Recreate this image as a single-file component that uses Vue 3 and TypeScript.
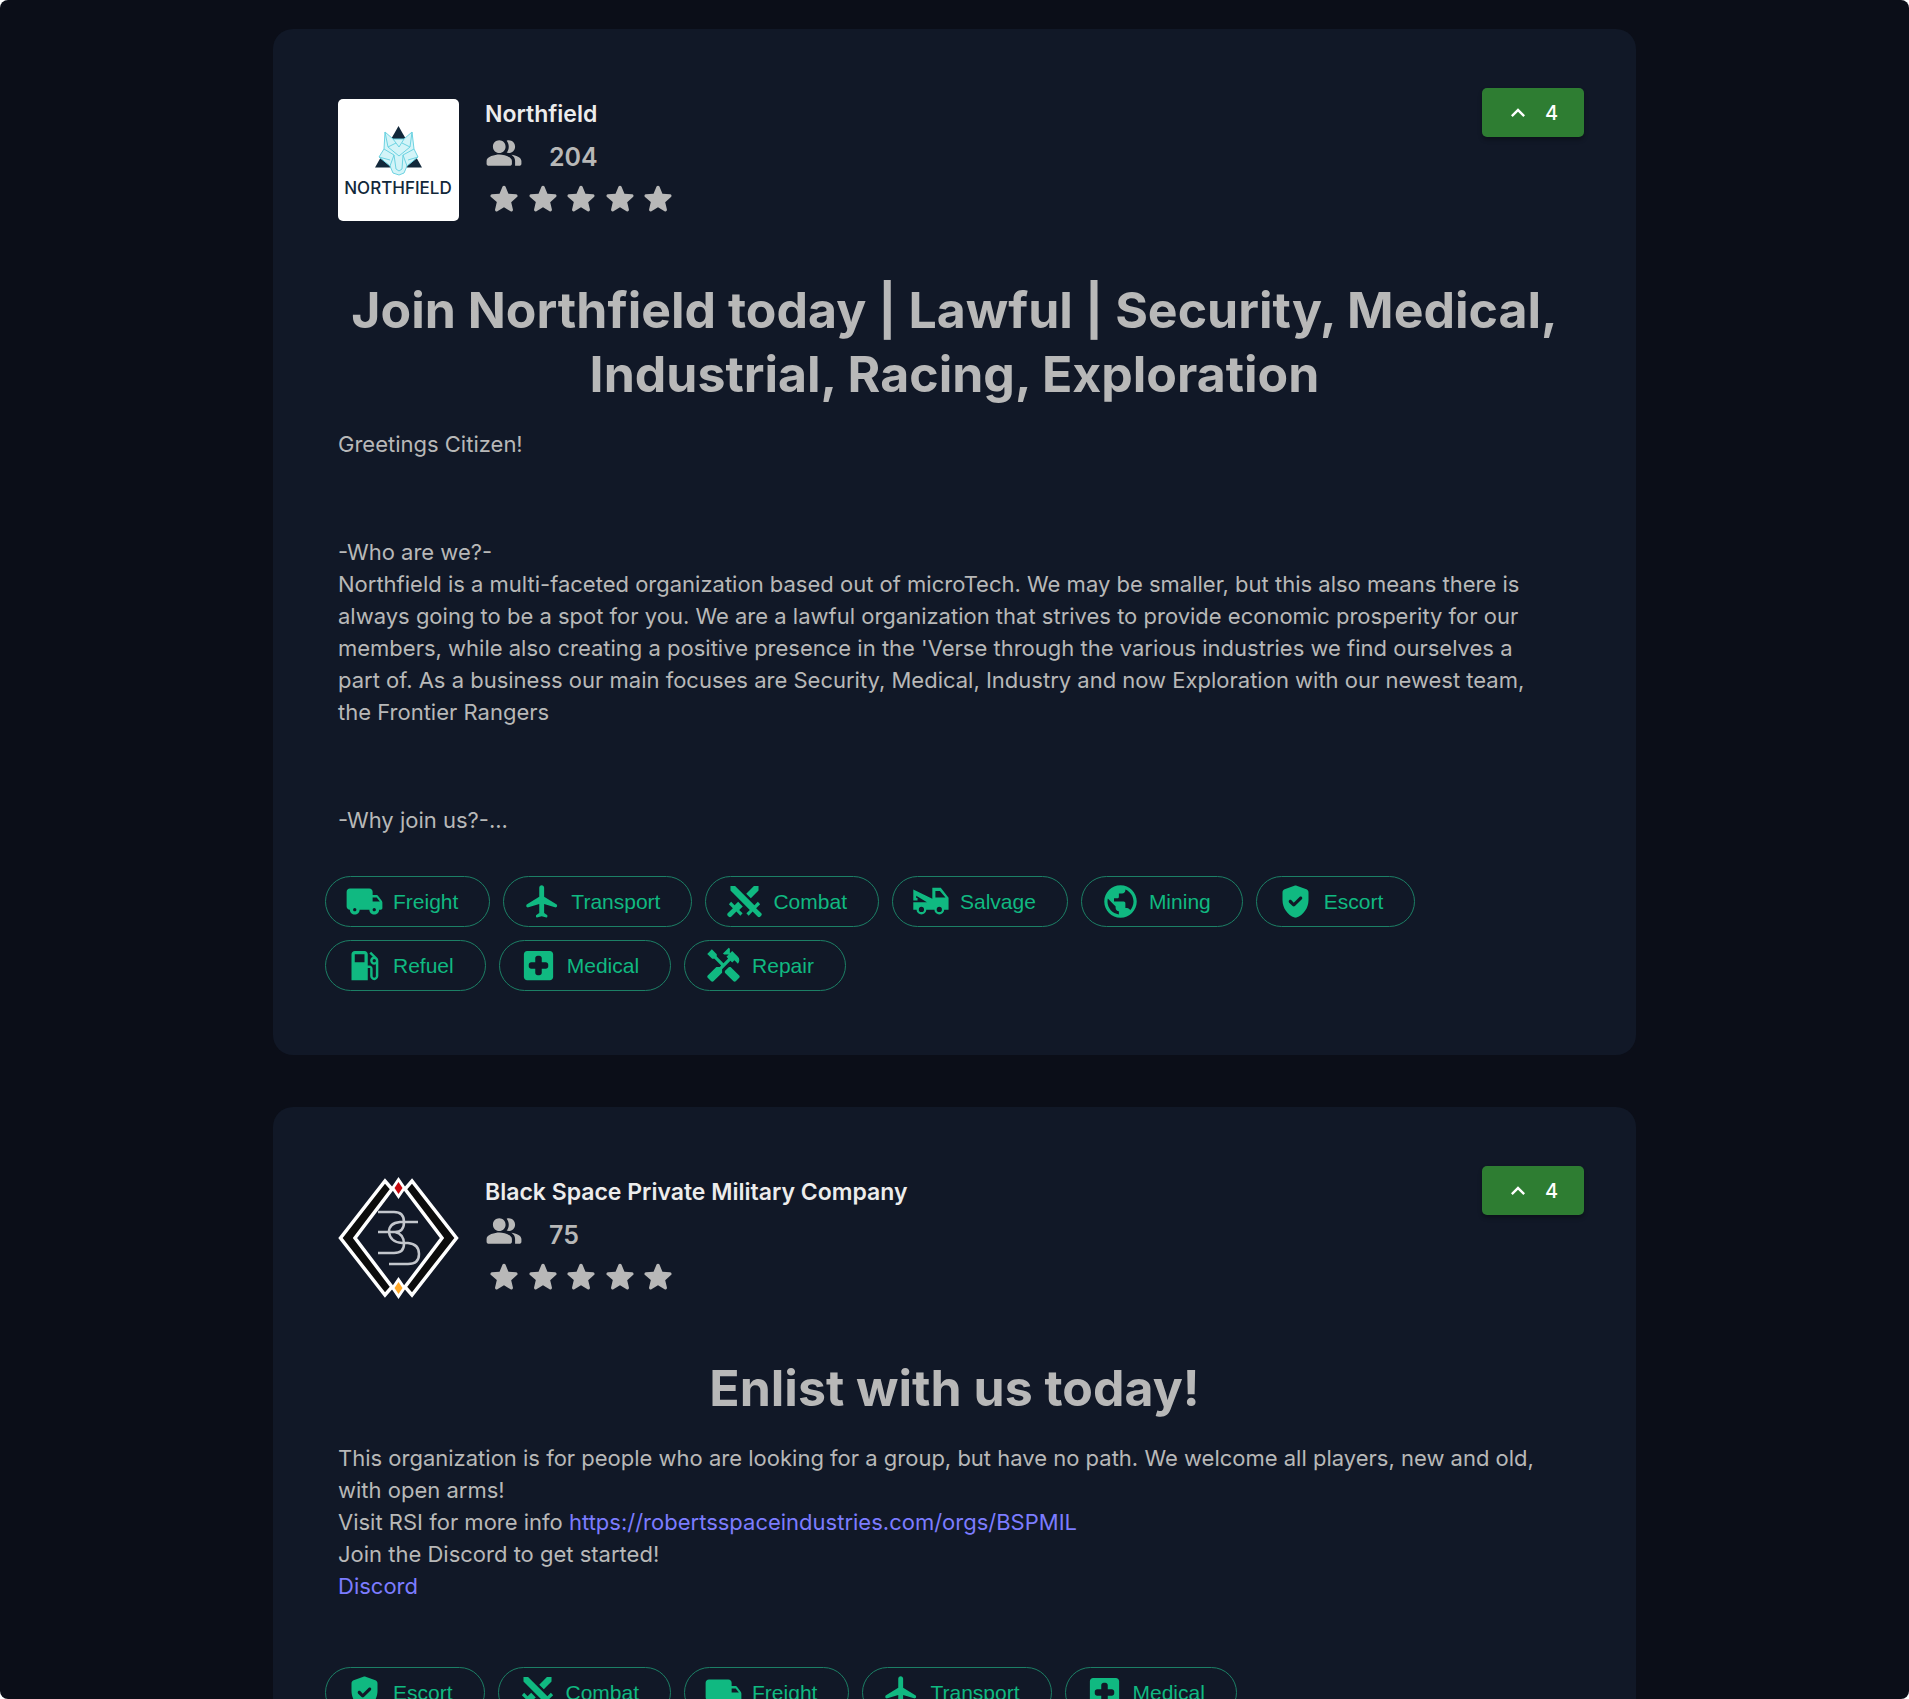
<script setup lang="ts">
import { ref } from 'vue'

type Activity =
  | 'Freight' | 'Transport' | 'Combat' | 'Salvage' | 'Mining'
  | 'Escort' | 'Refuel' | 'Medical' | 'Repair'

interface Part {
  text: string
  href?: string
}

interface Post {
  id: number
  org: string
  logo: 'northfield' | 'blackspace'
  members: number
  votes: number
  title: string
  // paragraphs -> lines -> text or link parts
  body: Part[][][]
  activities: Activity[]
}

const icons: Record<Activity, string> = {
  Freight:
    'M19.5 8H17V6c0-1.1-.9-2-2-2H3c-1.1 0-2 .9-2 2v9c0 1.1.9 2 2 2 0 1.66 1.34 3 3 3s3-1.34 3-3h6c0 1.66 1.34 3 3 3s3-1.34 3-3h1c.55 0 1-.45 1-1v-3.33c0-.43-.14-.85-.4-1.2L20.3 8.4c-.19-.25-.49-.4-.8-.4zM6 18c-.55 0-1-.45-1-1s.45-1 1-1 1 .45 1 1-.45 1-1 1zm13.5-8.5 1.96 2.5H17V9.5h2.5zM18 18c-.55 0-1-.45-1-1s.45-1 1-1 1 .45 1 1-.45 1-1 1z',
  Transport:
    'M21 14.58c0-.36-.19-.69-.49-.89L13 9V3.5c0-.83-.67-1.5-1.5-1.5S10 2.67 10 3.5V9l-7.51 4.69c-.3.19-.49.53-.49.89 0 .7.68 1.21 1.36 1L10 13.5V19l-1.8 1.35c-.13.09-.2.24-.2.4v.59c0 .33.32.57.64.48L11.5 21l2.86.82c.32.09.64-.15.64-.48v-.59c0-.16-.07-.31-.2-.4L13 19v-5.5l6.64 2.08c.68.21 1.36-.3 1.36-1z',
  Combat:
    'M6.2 2.44 18.1 14.34 20.22 12.22 21.63 13.63 19.16 16.1 22.34 19.28C22.73 19.67 22.73 20.3 22.34 20.69L21.63 21.4C21.24 21.79 20.61 21.79 20.22 21.4L17 18.23 14.56 20.7 13.15 19.29 15.27 17.17 3.37 5.27V2.44H6.2M15.89 10 20.63 5.26V2.44H17.8L13.06 7.18 15.89 10M10.94 15 8.11 12.13 5.9 14.34 3.78 12.22 2.37 13.63 4.84 16.1 1.66 19.29C1.27 19.68 1.27 20.31 1.66 20.7L2.37 21.41C2.76 21.8 3.39 21.8 3.78 21.41L7 18.23 9.44 20.7 10.85 19.29 8.73 17.17 10.94 15Z',
  Salvage:
    'M12.5 3.5h5.2l4.8 6.2V17h-2.7a3 3 0 0 1-6 0H8.8a3 3 0 0 1-6 0H.8v-4.5h8.4L2.6 8.4v1.4h.8v1.6H.8V4.6l11.7 5.7zm1.9 2v4.1h6.2l-3.4-4.1zM5.8 15.3a1.6 1.6 0 1 0 0 3.2 1.6 1.6 0 0 0 0-3.2zm11 0a1.6 1.6 0 1 0 0 3.2 1.6 1.6 0 0 0 0-3.2z',
  Mining:
    'M12 2C6.48 2 2 6.48 2 12s4.48 10 10 10 10-4.48 10-10S17.52 2 12 2zm-1 17.93c-3.95-.49-7-3.85-7-7.93 0-.62.08-1.21.21-1.79L9 15v1c0 1.1.9 2 2 2v1.93zm6.9-2.54c-.26-.81-1-1.39-1.9-1.39h-1v-3c0-.55-.45-1-1-1H8v-2h2c.55 0 1-.45 1-1V7h2c1.1 0 2-.9 2-2v-.41c2.93 1.19 5 4.06 5 7.41 0 2.08-.8 3.97-2.1 5.39z',
  Escort:
    'M11.3 2.26l-6 2.25C4.52 4.81 4 5.55 4 6.39v4.7c0 4.83 3.13 9.37 7.43 10.75.37.12.77.12 1.14 0 4.3-1.38 7.43-5.91 7.43-10.75v-4.7c0-.83-.52-1.58-1.3-1.87l-6-2.25c-.45-.17-.95-.17-1.4-.01zm-1.07 12.54L8.1 12.7c-.39-.39-.39-1.02 0-1.41.39-.39 1.02-.39 1.41 0l1.42 1.41 3.54-3.54c.39-.39 1.02-.39 1.41 0 .39.39.39 1.02 0 1.41l-4.24 4.24c-.4.38-1.02.38-1.41-.01z',
  Refuel:
    'M19.77 7.23l.01-.01-3.72-3.72L15 4.56l2.11 2.11c-.94.36-1.61 1.26-1.61 2.33 0 1.38 1.12 2.5 2.5 2.5.36 0 .69-.08 1-.21v7.21c0 .55-.45 1-1 1s-1-.45-1-1V14c0-1.1-.9-2-2-2h-1V5c0-1.1-.9-2-2-2H6c-1.1 0-2 .9-2 2v16h10v-7.5h1.5v5c0 1.38 1.12 2.5 2.5 2.5s2.5-1.12 2.5-2.5V9c0-.69-.28-1.32-.73-1.77zM12 10H6V5h6v5zm6 0c-.55 0-1-.45-1-1s.45-1 1-1 1 .45 1 1-.45 1-1 1z',
  Medical:
    'M19 3H5c-1.1 0-1.99.9-1.99 2L3 19c0 1.1.9 2 2 2h14c1.1 0 2-.9 2-2V5c0-1.1-.9-2-2-2zm-2.5 11H14v2.5c0 .83-.67 1.5-1.5 1.5h-1c-.83 0-1.5-.67-1.5-1.5V14H7.5c-.83 0-1.5-.67-1.5-1.5v-1c0-.83.67-1.5 1.5-1.5H10V7.5c0-.83.67-1.5 1.5-1.5h1c.83 0 1.5.67 1.5 1.5V10h2.5c.83 0 1.5.67 1.5 1.5v1c0 .83-.67 1.5-1.5 1.5z',
  Repair:
    'M21.67 18.17l-5.3-5.3h-.99l-2.54 2.54v.99l5.3 5.3c.39.39 1.02.39 1.41 0l2.12-2.12c.39-.38.39-1.02 0-1.41zM17.34 10.19l1.41-1.41 2.12 2.12c1.17-1.17 1.17-3.07 0-4.24l-3.54-3.54-1.41 1.41V1.71L15.22 1l-3.54 3.54.71.71h2.83l-1.41 1.41 1.06 1.06-2.89 2.89-4.13-4.13V5.06L4.83 2.04 2 4.87 5.03 7.9h1.41l4.13 4.13-.85.85H7.6l-5.3 5.3c-.39.39-.39 1.02 0 1.41l2.12 2.12c.39.39 1.02.39 1.41 0l5.3-5.3v-2.12l5.15-5.15 1.06 1.05z',
}

const star =
  'M12 17.27l4.15 2.51c.76.46 1.69-.22 1.49-1.08l-1.1-4.72 3.67-3.18c.67-.58.31-1.68-.57-1.75l-4.83-.41-1.89-4.46c-.34-.81-1.5-.81-1.84 0L9.19 8.63l-4.83.41c-.88.07-1.24 1.17-.57 1.75l3.67 3.18-1.1 4.72c-.2.86.73 1.54 1.49 1.08l4.15-2.5z'

const posts = ref<Post[]>([
  {
    id: 1,
    org: 'Northfield',
    logo: 'northfield',
    members: 204,
    votes: 4,
    title: 'Join Northfield today | Lawful | Security, Medical, Industrial, Racing, Exploration',
    body: [
      [[{ text: 'Greetings Citizen!' }]],
      [
        [{ text: '-Who are we?-' }],
        [{ text: "Northfield is a multi-faceted organization based out of microTech. We may be smaller, but this also means there is always going to be a spot for you. We are a lawful organization that strives to provide economic prosperity for our members, while also creating a positive presence in the 'Verse through the various industries we find ourselves a part of. As a business our main focuses are Security, Medical, Industry and now Exploration with our newest team, the Frontier Rangers" }],
      ],
      [[{ text: '-Why join us?-...' }]],
    ],
    activities: ['Freight', 'Transport', 'Combat', 'Salvage', 'Mining', 'Escort', 'Refuel', 'Medical', 'Repair'],
  },
  {
    id: 2,
    org: 'Black Space Private Military Company',
    logo: 'blackspace',
    members: 75,
    votes: 4,
    title: 'Enlist with us today!',
    body: [
      [
        [{ text: 'This organization is for people who are looking for a group, but have no path. We welcome all players, new and old, with open arms!' }],
        [
          { text: 'Visit RSI for more info ' },
          { text: 'https://robertsspaceindustries.com/orgs/BSPMIL', href: 'https://robertsspaceindustries.com/orgs/BSPMIL' },
        ],
        [{ text: 'Join the Discord to get started!' }],
        [{ text: 'Discord', href: '#discord' }],
      ],
      [],
    ],
    activities: ['Escort', 'Combat', 'Freight', 'Transport', 'Medical'],
  },
])

function upvote(post: Post): void {
  post.votes += 1
}
</script>

<template>
  <main class="page">
    <article v-for="post in posts" :key="post.id" class="card">
      <header class="head">
        <svg v-if="post.logo === 'northfield'" class="logo" viewBox="0 0 121 122" role="img" aria-label="Northfield logo">
          <rect width="121" height="122" rx="5" fill="#fff" />
          <path d="M60.500 27 84 68.500H37z" fill="#12283a" />
          <path d="M47 33 55 40H66L74 33 76 50 80 58 69 67 66 74 61 76 55 74 52 67 41 58 46 50z" fill="#d3f4f8" />
          <g fill="none" stroke="#6dd3e2" stroke-width="1" stroke-linejoin="round">
            <path d="M47 33 55 40H66L74 33 76 50 80 58 69 67 66 74 61 76 55 74 52 67 41 58 46 50z" />
            <path d="M47 33 50 48 61 57 72 48 74 33M55 40 61 48 66 40M46 50 56 56 52 67M76 50 65 56 69 67M56 56 58 70 61 72 64 70 65 56M50 48 58 44M72 48 64 44M41 58 52 61M80 58 70 61" />
          </g>
          <text x="60" y="95" text-anchor="middle" class="wordmark">NORTHFIELD</text>
        </svg>
        <svg v-else class="logo" viewBox="0 0 121 122" role="img" aria-label="Black Space logo">
          <g fill="#0c0c0c" stroke="#fff" stroke-width="3.500">
            <path d="M2.500 61 47 4 54 12 17 61 54 110 47 118z" />
            <path d="M118.500 61 74 4 67 12 104 61 67 110 74 118z" />
          </g>
          <path d="M60.500 0 68 11 60.500 22 53 11zM60.500 100 68 111 60.500 122 53 111z" fill="#fff" />
          <path d="M60.500 5 64.500 11 60.500 17 56.500 11z" fill="#c4060c" />
          <path d="M60.500 105 64.500 111 60.500 117 56.500 111z" fill="#ffa726" />
          <g fill="none" stroke="#c3c6cc" stroke-width="2.500">
            <path d="M40 35H56Q66 35 66 45 66 55 57 55H40M57 55Q66 57 66 67 66 76 56 76H40" />
            <path d="M80 45H62Q51 46 51 55 52 65 64 66H70Q81 67 81 77 81 87 70 87H51" />
          </g>
        </svg>

        <div class="info">
          <h2 class="org">{{ post.org }}</h2>
          <div class="members">
            <svg viewBox="0 0 24 24" role="img" aria-label="Members">
              <path d="M16.67 13.13C18.04 14.06 19 15.32 19 17v3h3c.55 0 1-.45 1-1v-2c0-2.18-3.57-3.47-6.33-3.87zM15 12c2.21 0 4-1.79 4-4s-1.79-4-4-4c-.47 0-.91.1-1.33.24C14.5 5.27 15 6.58 15 8s-.5 2.73-1.33 3.76c.42.14.86.24 1.33.24zM9 12c2.21 0 4-1.79 4-4s-1.79-4-4-4-4 1.79-4 4 1.79 4 4 4zM9 13c-2.67 0-8 1.34-8 4v2c0 .55.45 1 1 1h14c.55 0 1-.45 1-1v-2c0-2.66-5.33-4-8-4z" />
            </svg>
            <span class="count">{{ post.members }}</span>
          </div>
          <div class="stars" role="img" aria-label="5 stars">
            <svg v-for="n in 5" :key="n" viewBox="0 0 24 24"><path :d="star" /></svg>
          </div>
        </div>

        <button type="button" class="vote" @click="upvote(post)">
          <svg viewBox="0 0 24 24" aria-hidden="true"><path d="M12 8l-6 6 1.41 1.41L12 10.83l4.59 4.58L18 14z" /></svg>
          {{ post.votes }}
        </button>
      </header>

      <h1 class="title">{{ post.title }}</h1>

      <div class="body">
        <p v-for="(para, p) in post.body" :key="p" :class="{ blank: para.length === 0 }">
          <template v-for="(line, l) in para" :key="l">
            <br v-if="l > 0">
            <template v-for="(part, i) in line" :key="i">
              <a v-if="part.href" :href="part.href">{{ part.text }}</a>
              <template v-else>{{ part.text }}</template>
            </template>
          </template>
        </p>
      </div>

      <ul class="chips">
        <li v-for="name in post.activities" :key="name" class="chip">
          <svg viewBox="0 0 24 24" aria-hidden="true"><path fill-rule="evenodd" :d="icons[name]" /></svg>
          {{ name }}
        </li>
      </ul>
    </article>
  </main>
</template>

<style>
html {
  background: #fff;
  overflow: hidden;
  height: 100%;
}
body {
  height: 100%;
  overflow: hidden;
}
#app {
  height: 100%;
  overflow: hidden;
  border-radius: 8px;
  background: #0b0e18;
}
</style>

<style scoped>
.page {
  box-sizing: border-box;
  max-width: 1363px;
  margin: 0 auto;
  padding: 29px 0;
  display: flex;
  flex-direction: column;
  gap: 52px;
  font-family: Inter, "Liberation Sans", sans-serif;
  color: #b8b8b8;
}
.card {
  box-sizing: border-box;
  padding: 59px 52px 64px;
  border-radius: 20px;
  background: #111827;
}
.head {
  display: flex;
  align-items: flex-start;
  padding-left: 13px;
}
.logo {
  flex: none;
  width: 121px;
  height: 122px;
  margin-top: 11px;
}
.wordmark {
  font: 500 17px Inter, sans-serif;
  fill: #12283a;
}
.info {
  flex: 1;
  margin: 10px 0 0 26px;
}
.org {
  margin: 0;
  font-size: 23px;
  line-height: 32px;
  font-weight: 600;
  color: #ececec;
}
.members {
  display: flex;
  align-items: center;
  gap: 26px;
  height: 50px;
}
.members svg {
  width: 38px;
  height: 38px;
  margin-bottom: 4px;
  fill: currentColor;
}
.count {
  font-size: 25px;
  line-height: 32px;
  font-weight: 600;
  padding-top: 4px;
}
.stars {
  display: flex;
  justify-content: space-between;
  width: 192px;
}
.stars svg {
  width: 38px;
  height: 38px;
  fill: currentColor;
}
.vote {
  display: flex;
  align-items: center;
  gap: 13px;
  height: 49px;
  padding: 0 26px 0 22px;
  border: 0;
  border-radius: 5px;
  background: #2e7d32;
  box-shadow: 0 3px 4px rgba(0, 0, 0, .3);
  color: #fff;
  font: 500 20px Inter, sans-serif;
  cursor: pointer;
}
.vote svg {
  width: 28px;
  height: 28px;
  fill: currentColor;
}
.title {
  margin: 57px 13px 0;
  font-size: 50px;
  line-height: 64px;
  font-weight: 700;
  text-align: center;
}
.body {
  display: flex;
  flex-direction: column;
  margin: 22px 29px 0 13px;
  font-size: 22px;
  line-height: 32px;
}
.body p {
  margin: 0;
}
.body p + p {
  margin-top: 76px;
}
.body p + .blank {
  margin-top: 25px;
}
.body a {
  color: #7c7cff;
  text-decoration: none;
}
.chips {
  display: flex;
  flex-wrap: wrap;
  gap: 13px;
  margin: 40px 0 0;
  padding: 0;
  list-style: none;
}
.chip {
  box-sizing: border-box;
  display: flex;
  align-items: center;
  gap: 9px;
  height: 51px;
  padding: 0 31px 0 19px;
  border: 1px solid #1c7f65;
  border-radius: 26px;
  color: #10b981;
  font: 21px "Liberation Sans", Arial, sans-serif;
}
.chip svg {
  flex: none;
  width: 39px;
  height: 39px;
  fill: currentColor;
}
</style>
